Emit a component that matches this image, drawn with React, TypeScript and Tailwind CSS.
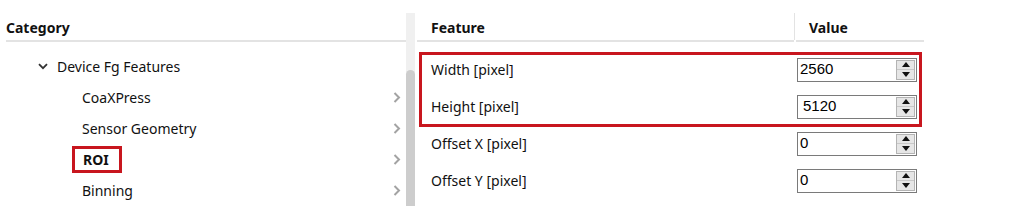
import React from "react";

const font = { fontFamily: '"Noto Sans", "Open Sans", sans-serif' };

function ChevronRight() {
  return (
    <svg width="8" height="11" viewBox="0 0 8 11" className="shrink-0">
      <path d="M1.5 1 L6 5.5 L1.5 10" fill="none" stroke="#a3a3a3" strokeWidth="2" />
    </svg>
  );
}

function ChevronDown() {
  return (
    <svg width="10" height="7" viewBox="0 0 10 7" className="shrink-0">
      <path d="M1 1.2 L5 5.2 L9 1.2" fill="none" stroke="#333" strokeWidth="1.8" />
    </svg>
  );
}

function SpinBox({ value, indent }: { value: string; indent?: boolean }) {
  return (
    <div className="flex h-[24px] w-[120px] items-stretch border border-[#7a7a7a] bg-white">
      <div
        className={`flex flex-1 items-center text-[15px] text-black ${indent ? "pl-[5px]" : "pl-[2px]"}`}
        style={{ fontFamily: '"Liberation Sans", Arial, sans-serif' }}
      >
        {value}
      </div>
      <div className="my-[1px] mr-[1px] flex w-[19px] flex-col border border-[#b4b4b4] bg-[#e6e6e6]">
        <div className="flex flex-1 items-center justify-center border-b border-[#c8c8c8]">
          <svg width="8" height="5" viewBox="0 0 8 5">
            <path d="M0 5 L4 0 L8 5 Z" fill="#111" />
          </svg>
        </div>
        <div className="flex flex-1 items-center justify-center">
          <svg width="8" height="5" viewBox="0 0 8 5">
            <path d="M0 0 L8 0 L4 5 Z" fill="#111" />
          </svg>
        </div>
      </div>
    </div>
  );
}

const children = ["CoaXPress", "Sensor Geometry", "ROI", "Binning"];

const features = [
  { name: "Width [pixel]", value: "2560" },
  { name: "Height [pixel]", value: "5120", indent: true },
  { name: "Offset X [pixel]", value: "0" },
  { name: "Offset Y [pixel]", value: "0" },
];

export default function App() {
  return (
    <div className="flex h-[206px] w-[1014px] overflow-hidden bg-white text-[#111]" style={font}>
      {/* Left panel */}
      <div className="flex w-[406px] flex-col pl-[6px]">
        <div className="flex h-[40px] items-end pb-[2px] text-[14px] font-bold leading-[20px]">Category</div>
        <div className="h-[2px] bg-[#e3e3e3]" />
        <div className="flex flex-col pt-[9px]">
          <div className="flex h-[31px] items-center pl-[32px] text-[14px]">
            <ChevronDown />
            <span className="ml-[9px]">Device Fg Features</span>
          </div>
          {children.map((c) => (
            <div key={c} className="flex h-[31px] items-center pl-[76px] pr-[5px] text-[14px]">
              {c === "ROI" ? (
                <span className="ml-[-10px] inline-flex h-[27px] items-center border-[3px] border-[#c8161e] pl-[8px] pr-[10px] font-bold">
                  ROI
                </span>
              ) : (
                <span>{c}</span>
              )}
              <span className="flex-1" />
              <ChevronRight />
            </div>
          ))}
        </div>
      </div>

      {/* Scrollbar */}
      <div className="mt-[13px] flex w-[9px] justify-center bg-[#f0f0f0] pt-[57px]">
        <div className="w-[6px] flex-1 rounded-t-full bg-[#cdcdcd]" />
      </div>

      {/* Right panel */}
      <div className="flex w-[509px] flex-col pl-[2px]">
        <div className="mt-[13px] flex h-[27px]">
          <div className="flex w-[378px] items-end border-r border-[#e3e3e3] pb-[2px] pl-[14px] text-[14px] font-bold leading-[20px]">
            Feature
          </div>
          <div className="flex flex-1 items-end pb-[2px] pl-[14px] text-[14px] font-bold leading-[20px]">Value</div>
        </div>
        <div className="flex h-[2px] gap-[2px]">
          <div className="w-[377px] bg-[#e3e3e3]" />
          <div className="flex-1 bg-[#e3e3e3]" />
        </div>
        <div className="relative flex flex-col pt-[9px]">
          {features.map((f) => (
            <div key={f.name} className="flex h-[37px] items-center">
              <div className="w-[380px] pl-[14px] text-[14px]">{f.name}</div>
              <SpinBox value={f.value} indent={f.indent} />
            </div>
          ))}
          <div className="pointer-events-none absolute left-[2px] top-[10px] h-[75px] w-[503px] border-[3px] border-[#c8161e]" />
        </div>
      </div>
    </div>
  );
}
